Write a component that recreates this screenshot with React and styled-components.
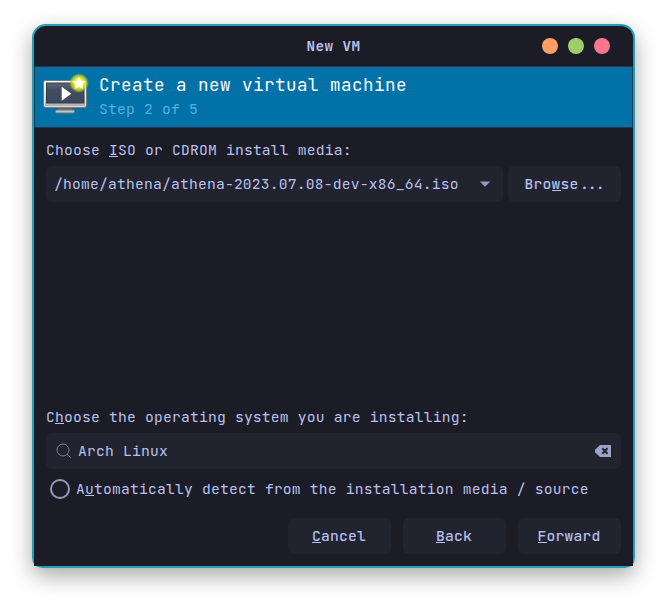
import React from "react";
import styled, { createGlobalStyle } from "styled-components";

const GlobalStyle = createGlobalStyle`
  * { box-sizing: border-box; }
  body { margin: 0; background: #fff; }
`;

const Page = styled.div`
  height: 608px;
  padding: 24px 32px 40px;
  background: #fff;
`;

const Window = styled.main`
  width: 603px;
  height: 544px;
  display: flex;
  flex-direction: column;
  border: 2px solid #229fb8;
  border-radius: 14px 14px 10px 10px;
  background: #1c1c27;
  box-shadow: 0 8px 22px rgba(0, 0, 0, 0.34);
  color: #b9c2ef;
  font: 14.67px/20px "JetBrains Mono", "DejaVu Sans Mono", monospace;
  letter-spacing: 0.2px;
  white-space: pre;
`;

const TitleBar = styled.header`
  height: 40px;
  flex: none;
  display: grid;
  grid-template-columns: 1fr auto 1fr;
  align-items: center;
  padding-right: 23px;
  padding-left: 23px;
`;

const WindowTitle = styled.h1`
  grid-column: 2;
  margin: 0;
  font-size: 14.3px;
  line-height: 20px;
  letter-spacing: 0.4px;
`;

const Controls = styled.div`
  display: flex;
  justify-content: flex-end;
  gap: 10px;
`;

const Dot = styled.span`
  width: 16px;
  height: 16px;
  border-radius: 50%;
  background: ${(p) => p.$color};
`;

const Banner = styled.section`
  height: 62px;
  flex: none;
  display: flex;
  border: 1px solid #2b3548;
  background: #0072a8;
  padding: 5px 8px 0;
`;

const BannerText = styled.div`
  margin-left: 8px;
`;

const Heading = styled.h2`
  margin: 0;
  color: #fff;
  font-size: 17.6px;
  font-weight: 400;
  line-height: 26px;
  letter-spacing: 0.44px;
`;

const Step = styled.div`
  color: #53b0df;
  line-height: 22px;
`;

const Body = styled.section`
  flex: 1;
  display: flex;
  flex-direction: column;
  padding: 12px 12px 12px;
  background: #1c1c27;
`;

const Label = styled.div`
  height: 20px;
  margin-bottom: 6px;
`;

const Row = styled.div`
  display: flex;
  gap: ${(p) => p.$gap}px;
  justify-content: flex-end;
`;

const Field = styled.div`
  height: 36px;
  flex: ${(p) => (p.$stacked ? "none" : "1")};
  display: flex;
  align-items: center;
  border-radius: 6px;
  background: #21232e;
  padding: 0 ${(p) => (p.$stacked ? "10px 0 10px" : "12px 0 8px")};
`;

const Value = styled.span`
  flex: 1;
`;

const Button = styled.button`
  width: ${(p) => p.$width}px;
  height: 36px;
  padding: 0 1px 0 0;
  border: 0;
  border-radius: 6px;
  background: #21232e;
  color: inherit;
  font: inherit;
  letter-spacing: inherit;
  white-space: pre;
  -webkit-text-stroke: 0.2px #b9c2ef;
`;

const Ellipsis = styled.span`
  margin-left: 1.5px;
  letter-spacing: -1px;
`;

const Key = styled.span`
  display: inline-block;
  height: 17px;
  line-height: 20px;
  border-bottom: 1px solid currentColor;
`;

const Spacer = styled.div`
  flex: 1;
`;

const Option = styled.label`
  height: 20px;
  margin: 10px 0 19px 4px;
  display: flex;
  align-items: center;
  gap: 6px;
`;

const Radio = styled.span`
  width: 20px;
  height: 20px;
  border: 2px solid #9299be;
  border-radius: 50%;
`;

const Icon = styled.svg`
  display: block;
  flex: none;
`;

const SearchIcon = styled(Icon)`
  margin-right: 6px;
`;

const MonitorIcon = styled(Icon)`
  overflow: visible;
  margin-top: 1px;
`;

function Monitor() {
  return (
    <MonitorIcon width="48" height="48" viewBox="0 0 48 48">
      <defs>
        <linearGradient id="frame" x2="0" y2="1">
          <stop stopColor="#fafafa" />
          <stop offset="0.7" stopColor="#cecece" />
          <stop offset="1" stopColor="#a7a7a7" />
        </linearGradient>
        <linearGradient id="screen" x2="0" y2="1">
          <stop stopColor="#5b6676" />
          <stop offset="0.35" stopColor="#424e60" />
          <stop offset="1" stopColor="#3c485b" />
        </linearGradient>
        <radialGradient id="glow">
          <stop stopColor="#ffff80" />
          <stop offset="0.5" stopColor="#e6ee1e" />
          <stop offset="0.75" stopColor="#c5d92a" stopOpacity="0.75" />
          <stop offset="1" stopColor="#9cc52e" stopOpacity="0" />
        </radialGradient>
      </defs>
      <path d="M17 35h14v4H17z" fill="#666965" transform="translate(-2)" />
      <rect x="12.5" y="37" width="19" height="3" rx="1" fill="#c5c5c4" stroke="#777" />
      <rect x="0.5" y="7.5" width="43" height="27" rx="2" fill="url(#frame)" stroke="#777b7c" />
      <rect x="1.5" y="8.5" width="41" height="25" rx="1.2" fill="none" stroke="#fff" opacity="0.6" />
      <rect x="3.5" y="10" width="37.5" height="20" fill="url(#screen)" stroke="#333d4c" />
      <path d="M18.7 13.8v14L28.3 20.8z" fill="#fff" />
      <circle cx="36" cy="10" r="10" fill="url(#glow)" />
      <path d="m36 3.5 2 4.2 4.6.5-3.4 3.2.9 4.6-4.1-2.2-4.1 2.2.9-4.6-3.4-3.2 4.6-.5z" fill="#fff" />
    </MonitorIcon>
  );
}

export default function App() {
  return (
    <Page>
      <GlobalStyle />
      <Window>
        <TitleBar>
          <WindowTitle>New VM</WindowTitle>
          <Controls>
            <Dot $color="#ff9e64" />
            <Dot $color="#9ece6a" />
            <Dot $color="#f7768e" />
          </Controls>
        </TitleBar>
        <Banner>
          <Monitor />
          <BannerText>
            <Heading>Create a new virtual machine</Heading>
            <Step>Step 2 of 5</Step>
          </BannerText>
        </Banner>
        <Body>
          <Label>Choose <Key>I</Key>SO or CDROM install media:</Label>
          <Row $gap={5}>
            <Field>
              <Value>/home/athena/athena-2023.07.08-dev-x86_64.iso</Value>
              <Icon width="12" height="6" viewBox="0 0 12 6">
                <path d="M.8.5h10.4L6 5.7z" fill="#929abf" />
              </Icon>
            </Field>
            <Button $width={113}>Bro<Key>w</Key>se<Ellipsis>...</Ellipsis></Button>
          </Row>
          <Spacer />
          <Label>C<Key>h</Key>oose the operating system you are installing:</Label>
          <Field $stacked>
            <SearchIcon width="16" height="16" viewBox="0 0 16 16" fill="none" stroke="#777d9d">
              <circle cx="7" cy="7" r="6" />
              <path d="m11.3 11.3 3.4 3.4" />
            </SearchIcon>
            <Value>Arch Linux</Value>
            <Icon width="17" height="12" viewBox="0 0 17 12">
              <path d="M6 0h11v12H6L1 7.2V4.8z" fill="#9ba3c8" />
              <path d="m8.3 3.3 5.2 5.4m0-5.4L8.3 8.7" stroke="#21232e" strokeWidth="2" />
            </Icon>
          </Field>
          <Option>
            <Radio />
            <span>A<Key>u</Key>tomatically detect from the installation media / source</span>
          </Option>
          <Row $gap={12}>
            <Button $width={103}><Key>C</Key>ancel</Button>
            <Button $width={103}><Key>B</Key>ack</Button>
            <Button $width={103}><Key>F</Key>orward</Button>
          </Row>
        </Body>
      </Window>
    </Page>
  );
}
